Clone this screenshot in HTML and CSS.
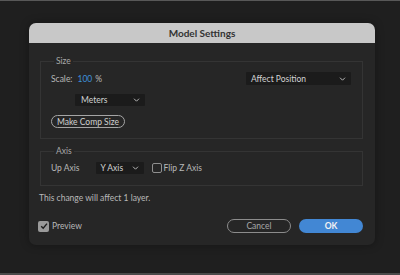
FILE: index.html
```html
<!DOCTYPE html>
<html>
<head>
<meta charset="utf-8">
<link rel="stylesheet" href="styles.css">
</head>
<body>
<div class="page">
  <div class="dialog">
    <div class="titlebar">Model Settings</div>
    <div class="content">
      <fieldset class="group size">
        <legend>Size</legend>
        <div class="row row-scale">
          <div class="scale"><span class="label">Scale:</span><span class="value">100</span><span class="unit">%</span></div>
          <div class="select select-affect"><span>Affect Position</span><svg class="chev" viewBox="0 0 7 4" width="7" height="4"><path d="M1 0.7l2.5 2.5L6 0.7"/></svg></div>
        </div>
        <div class="row row-units">
          <div class="select select-meters"><span>Meters</span><svg class="chev" viewBox="0 0 7 4" width="7" height="4"><path d="M1 0.7l2.5 2.5L6 0.7"/></svg></div>
        </div>
        <div class="row row-comp">
          <button class="btn-outline">Make Comp Size</button>
        </div>
      </fieldset>
      <fieldset class="group axis">
        <legend>Axis</legend>
        <div class="row row-axis">
          <span class="label up-label">Up Axis</span>
          <div class="select select-axis"><span>Y Axis</span><svg class="chev" viewBox="0 0 7 4" width="7" height="4"><path d="M1 0.7l2.5 2.5L6 0.7"/></svg></div>
          <span class="check"></span>
          <span class="label flip-label">Flip Z Axis</span>
        </div>
      </fieldset>
      <div class="note">This change will affect 1 layer.</div>
      <div class="footer">
        <div class="preview">
          <span class="check checked"><svg viewBox="0 0 10 10" width="10" height="10"><path d="M2.2 5.2l2 2.1L8 2.6"/></svg></span>
          <span class="label">Preview</span>
        </div>
        <div class="buttons">
          <button class="btn-cancel">Cancel</button>
          <button class="btn-ok">OK</button>
        </div>
      </div>
    </div>
  </div>
</div>
</body>
</html>
```
FILE: styles.css
```css
* { box-sizing: border-box; }
html, body { margin: 0; padding: 0; }
body {
  background: #1f1f1f;
  font-family: "Lato", "Open Sans", sans-serif;
  font-size: 8.5px;
}
.page {
  width: 400px;
  height: 275px;
  background: #1f1f1f;
  border-top: 1px solid #585858;
  border-bottom: 2px solid #4a4a4a;
  padding: 22px 0 0 29px;
}
.dialog {
  width: 346px;
  height: 222px;
  background: #262626;
  border-radius: 7px;
  overflow: hidden;
  box-shadow: 0 0 8px rgba(0,0,0,0.35);
  display: flex;
  flex-direction: column;
}
.titlebar {
  height: 20px;
  background: #c8c8c8;
  color: #333;
  font-weight: 700;
  font-size: 10px;
  line-height: 20px;
  text-align: center;
  flex: none;
}
.content {
  padding: 13px 12px 0 11px;
  display: flex;
  flex-direction: column;
}
.group {
  margin: 0;
  padding: 0 11px 0 10px;
  border: 1px solid #343434;
  min-width: 0;
}
.group legend {
  color: #a8a8a8;
  padding: 0 2px;
  margin-left: 3px;
  line-height: 11px;
  font-size: 8.5px;
}
.size { padding-top: 5px; padding-bottom: 10px; }
.axis { margin-top: 7px; padding-top: 5px; padding-bottom: 11px; }
.row { display: flex; align-items: center; }
.row-scale { justify-content: space-between; height: 13px; }
.row-units { margin-top: 9px; padding-left: 24px; }
.row-comp { margin-top: 9px; }
.label { color: #b8b8b8; }
.scale { display: flex; align-items: center; }
.scale .value { color: #3d8fd9; margin-left: 5px; }
.scale .unit { color: #b8b8b8; margin-left: 3px; }
.select {
  background: #1b1b1b;
  color: #d2d2d2;
  display: flex;
  align-items: center;
  justify-content: space-between;
  border-radius: 1px;
}
.select .chev { fill: none; stroke: #b5b5b5; stroke-width: 1; }
.select-affect { width: 105px; height: 13px; padding: 0 5px 0 5px; }
.select-meters { width: 70px; height: 12px; padding: 0 5px 0 6px; }
.select-axis { width: 48px; height: 12px; padding: 0 5px 0 5px; margin-left: 16px; }
.btn-outline {
  font-family: inherit;
  font-size: 8.5px;
  color: #d0d0d0;
  background: transparent;
  border: 1.5px solid #a5a5a5;
  border-radius: 7px;
  width: 74px;
  height: 13px;
  padding: 0;
  line-height: 10px;
}
.row-axis { height: 12px; }
.check {
  width: 10px;
  height: 10px;
  border: 1.5px solid #8f8f8f;
  border-radius: 2px;
  margin-left: 8px;
  display: inline-flex;
  align-items: center;
  justify-content: center;
}
.flip-label { margin-left: 2px; }
.note {
  color: #b8b8b8;
  margin-top: 7px;
  line-height: 11px;
  margin-left: -1px;
}
.footer {
  margin-top: 15px;
  display: flex;
  align-items: center;
  justify-content: space-between;
  margin-left: -2px;
}
.preview { display: flex; align-items: center; }
.check.checked {
  margin-left: 0;
  width: 11px;
  height: 11px;
  background: #9a9a9a;
  border: none;
  margin-right: 3px;
}
.check.checked svg { fill: none; stroke: #1e1e1e; stroke-width: 1.4; }
.buttons { display: flex; gap: 8px; }
.btn-cancel, .btn-ok {
  font-family: inherit;
  font-size: 8.5px;
  width: 64px;
  height: 14px;
  border-radius: 7px;
  padding: 0;
  line-height: 11px;
}
.btn-cancel {
  background: transparent;
  color: #a8a8a8;
  border: 1.5px solid #8c8c8c;
}
.btn-ok {
  background: #4287d4;
  color: #f2f2f2;
  border: none;
  font-weight: 700;
}
```
